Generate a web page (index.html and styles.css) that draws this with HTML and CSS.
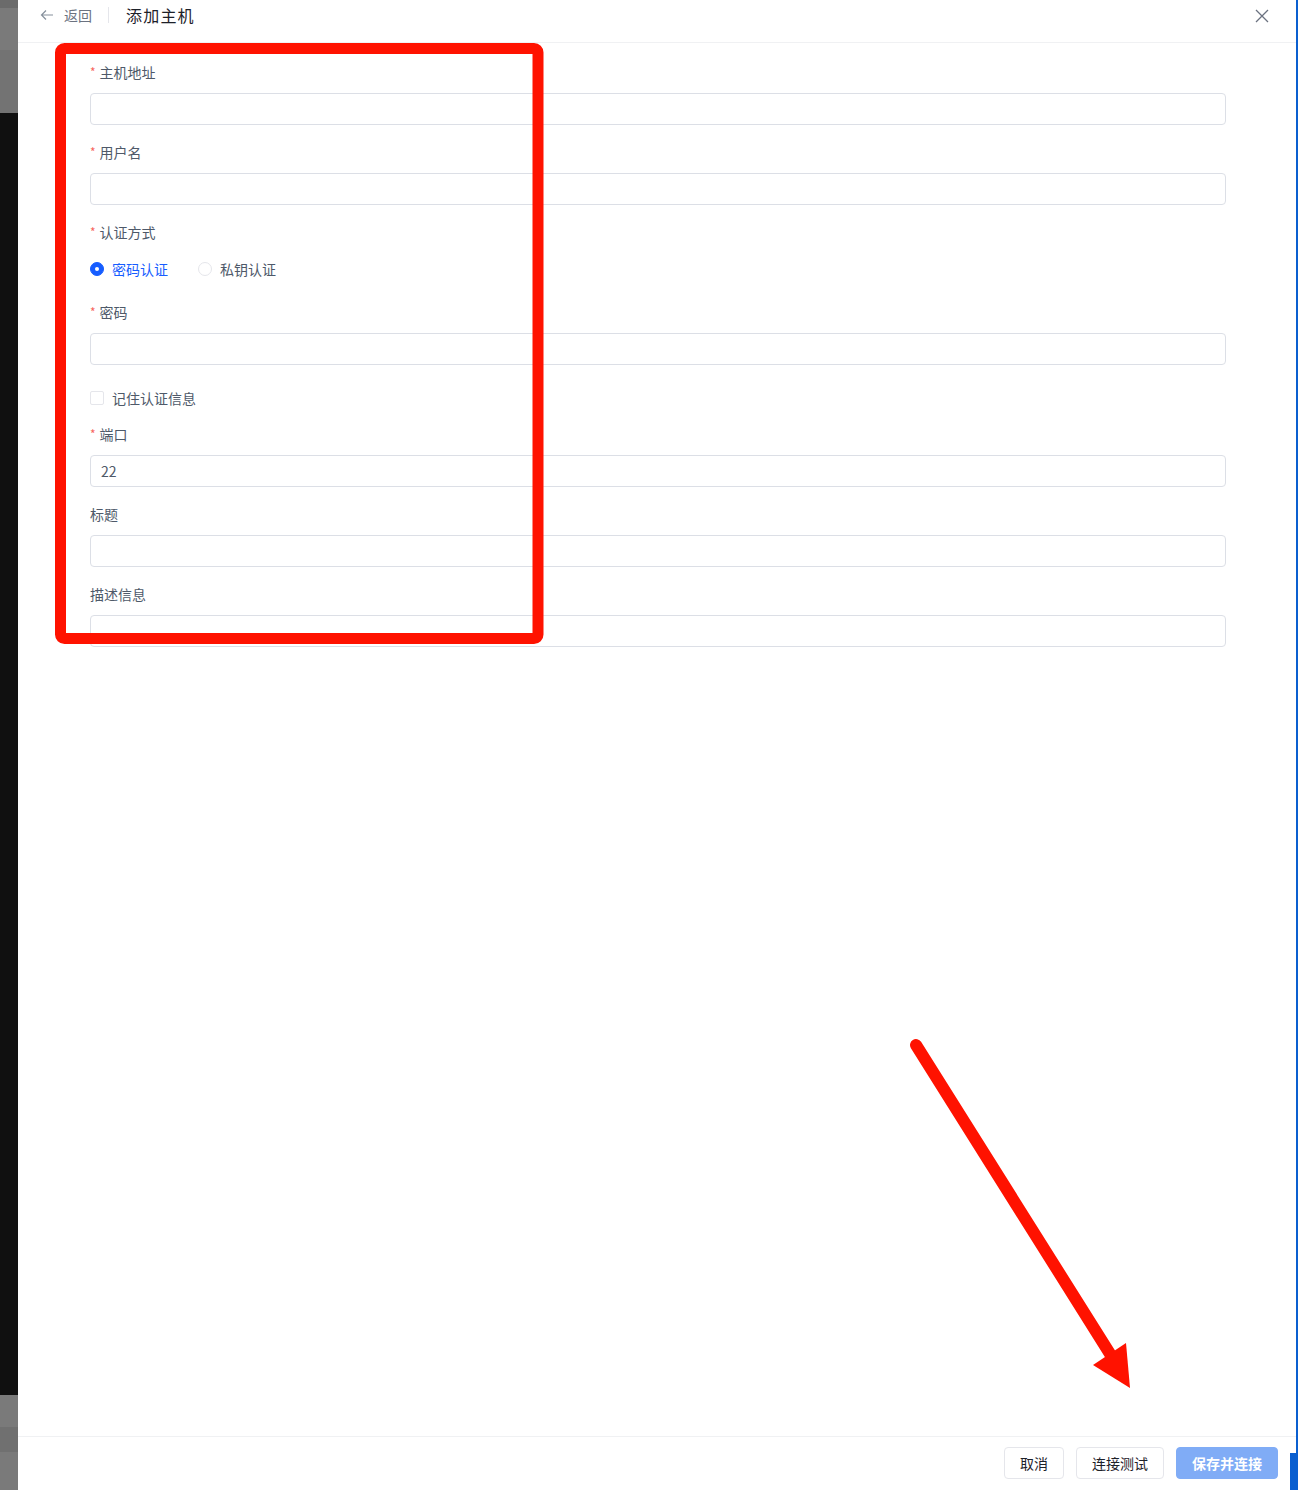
FILE: index.html
```html
<!DOCTYPE html>
<html lang="zh-CN">
<head>
  <meta charset="UTF-8" />
  <meta name="viewport" content="width=device-width, initial-scale=1.0" />
  <title>添加主机</title>
  <link rel="stylesheet" href="styles.css">
</head>
<body>
  <div class="page">
    <!-- backdrop strip on the left -->
    <div class="backdrop"></div>

    <!-- Drawer -->
    <div class="drawer">
      <div class="drawer-header">
        <span class="back">
          <svg width="14" height="14" viewBox="0 0 14 14" fill="none" stroke="#86909c" stroke-width="1.2">
            <path d="M13 7H1.5M6 2.5L1.5 7L6 11.5" />
          </svg>
          <span>返回</span>
        </span>
        <span class="divider"></span>
        <span class="title">添加主机</span>
        <span class="close">
          <svg width="14" height="14" viewBox="0 0 14 14" fill="none" stroke="#6b7280" stroke-width="1.3">
            <path d="M1 1L13 13M13 1L1 13" />
          </svg>
        </span>
      </div>

      <div class="drawer-body">
        <form class="form">
          <div class="form-item">
            <label class="label"><span class="req">*</span>主机地址</label>
            <input class="input" type="text">
          </div>
          <div class="form-item">
            <label class="label"><span class="req">*</span>用户名</label>
            <input class="input" type="text">
          </div>
          <div class="form-item">
            <label class="label"><span class="req">*</span>认证方式</label>
            <div class="radio-group">
              <span class="radio checked"><i></i>密码认证</span>
              <span class="radio"><i></i>私钥认证</span>
            </div>
          </div>
          <div class="form-item">
            <label class="label"><span class="req">*</span>密码</label>
            <input class="input" type="password">
          </div>
          <div class="form-item check-item">
            <span class="checkbox"><i></i>记住认证信息</span>
          </div>
          <div class="form-item">
            <label class="label"><span class="req">*</span>端口</label>
            <input class="input" type="text" value="22">
          </div>
          <div class="form-item">
            <label class="label">标题</label>
            <input class="input" type="text">
          </div>
          <div class="form-item">
            <label class="label">描述信息</label>
            <input class="input" type="text">
          </div>
        </form>
      </div>

      <div class="drawer-footer">
        <button class="btn">取消</button>
        <button class="btn">连接测试</button>
        <button class="btn primary">保存并连接</button>
      </div>
    </div>

    <div class="edge"></div>
  </div>

  <!-- red annotations drawn over the screenshot -->
  <svg class="marks" width="1298" height="1490" viewBox="0 0 1298 1490">
    <rect x="60.5" y="48.5" width="477.5" height="590" rx="4" fill="none" stroke="#ff1200" stroke-width="11" />
    <line x1="916" y1="1045" x2="1112" y2="1357" stroke="#ff1200" stroke-width="12" stroke-linecap="round" />
    <polygon points="1130,1388 1093,1365 1126,1343" fill="#ff1200" />
  </svg>
  <div class="edge-block"></div>
</body>
</html>
```

FILE: styles.css
```css
* { margin: 0; padding: 0; box-sizing: border-box; }
html, body {
  width: 100%;
  height: 100%;
  overflow: hidden;
  font-family: "Noto Sans CJK SC", "Noto Sans", sans-serif;
  font-size: 14px;
  color: #4e5969;
  background: #fff;
}
.page { display: flex; height: 1490px; }

.backdrop {
  width: 18px;
  flex: none;
  background: linear-gradient(to bottom,
    #6b6b6b 0, #6b6b6b 8px,
    #7a7a7a 8px, #7a7a7a 50px,
    #737373 50px, #737373 113px,
    #101010 113px, #101010 1395px,
    #7a7a7a 1395px, #7a7a7a 1427px,
    #707070 1427px, #707070 1452px,
    #7a7a7a 1452px);
}
.edge { width: 2px; flex: none; background: #0a5fd0; }

.drawer { flex: 1; display: flex; flex-direction: column; background: #fff; }

.drawer-header {
  height: 43px;
  border-bottom: 1px solid #f0f1f3;
  display: flex;
  align-items: center;
  padding: 0 22px 13px 22px;
}
.back { display: flex; align-items: center; gap: 10px; color: #6b7280; font-size: 14px; }
.back svg { margin-top: 1px; }
.divider { width: 1px; height: 16px; background: #e5e6eb; margin: 0 17px 0 16px; }
.title { font-size: 16px; color: #1d2129; letter-spacing: 1.2px; }
.close { margin-left: auto; margin-right: 5px; display: flex; margin-top: 2px; }

.drawer-body { flex: 1; padding: 19px 70px 0 72px; }

.form-item { margin-bottom: 17px; }
.label { display: block; height: 21px; line-height: 21px; margin-bottom: 10px; color: #4e5969; }
.req { color: #f76560; font-size: 12px; margin-right: 4px; position: relative; top: -1px; }
.input {
  display: block;
  width: 100%;
  height: 32px;
  border: 1px solid #dcdfe6;
  border-radius: 4px;
  padding: 0 10px;
  font-family: inherit;
  font-size: 14px;
  color: #4e5969;
  outline: none;
}

.radio-group { height: 32px; display: flex; align-items: center; gap: 30px; }
.radio { display: flex; align-items: center; gap: 8px; color: #4e5969; }
.radio i { width: 14px; height: 14px; border-radius: 50%; border: 1px solid #e5e6eb; display: block; }
.radio.checked { color: #165dff; }
.radio.checked i { background: #165dff; border-color: #165dff; position: relative; }
.radio.checked i::after {
  content: "";
  position: absolute;
  left: 4px; top: 4px;
  width: 4px; height: 4px;
  border-radius: 50%;
  background: #fff;
}

.check-item { height: 32px; display: flex; align-items: center; margin-bottom: 10px; }
.checkbox { display: flex; align-items: center; gap: 8px; color: #4e5969; }
.checkbox i { width: 14px; height: 14px; border: 1px solid #e5e6eb; border-radius: 2px; display: block; }

.drawer-footer {
  height: 54px;
  border-top: 1px solid #f0f1f3;
  display: flex;
  justify-content: flex-end;
  align-items: flex-start;
  gap: 12px;
  padding: 10px 18px 0 0;
}
.btn {
  height: 32px;
  padding: 0 15px;
  border: 1px solid #e5e6eb;
  border-radius: 4px;
  background: #fff;
  color: #1d2129;
  font-family: inherit;
  font-size: 14px;
}
.btn.primary { background: #80acf6; border-color: #80acf6; color: #fff; font-weight: 600; }

.marks { position: absolute; top: 0; left: 0; pointer-events: none; }
.edge-block { position: absolute; left: 1290px; top: 1453px; width: 8px; height: 37px; background: #0a5fd0; }
```
